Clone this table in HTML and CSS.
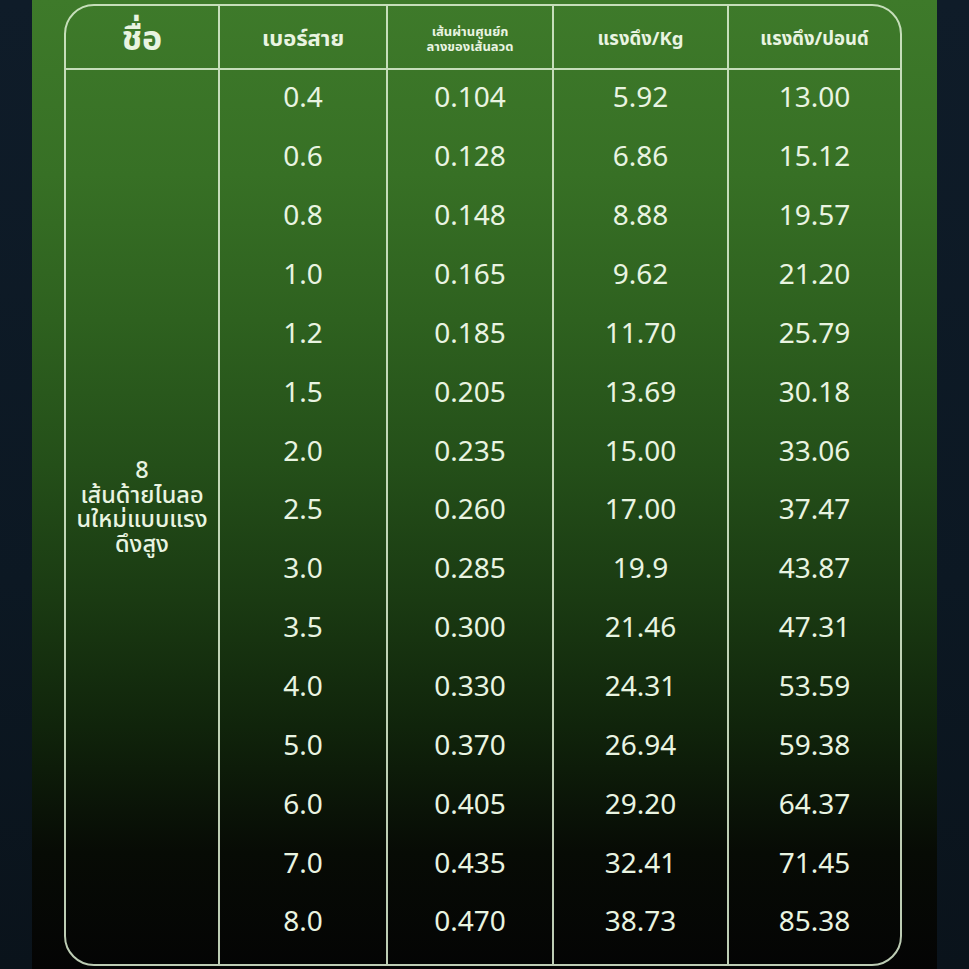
FILE: index.html
```html
<!DOCTYPE html>
<html lang="th">
<head>
<meta charset="utf-8">
<title>ตารางสาย</title>
<link rel="stylesheet" href="styles.css">
</head>
<body>
<div class="panel">
  <div class="table">
    <div class="cell head head-name">ชื่อ</div>
    <div class="cell head head-md">เบอร์สาย</div>
    <div class="cell head head-sm">เส้นผ่านศูนย์ก<br>ลางของเส้นลวด</div>
    <div class="cell head head-md2">แรงดึง/Kg</div>
    <div class="cell head head-md2 last">แรงดึง/ปอนด์</div>

    <div class="cell name">8<br>เส้นด้ายไนลอ<br>นใหม่แบบแรง<br>ดึงสูง</div>
    <div class="col">
      <div class="num">0.4</div><div class="num">0.6</div><div class="num">0.8</div><div class="num">1.0</div><div class="num">1.2</div><div class="num">1.5</div><div class="num">2.0</div><div class="num">2.5</div><div class="num">3.0</div><div class="num">3.5</div><div class="num">4.0</div><div class="num">5.0</div><div class="num">6.0</div><div class="num">7.0</div><div class="num">8.0</div>
    </div>
    <div class="col">
      <div class="num">0.104</div><div class="num">0.128</div><div class="num">0.148</div><div class="num">0.165</div><div class="num">0.185</div><div class="num">0.205</div><div class="num">0.235</div><div class="num">0.260</div><div class="num">0.285</div><div class="num">0.300</div><div class="num">0.330</div><div class="num">0.370</div><div class="num">0.405</div><div class="num">0.435</div><div class="num">0.470</div>
    </div>
    <div class="col">
      <div class="num">5.92</div><div class="num">6.86</div><div class="num">8.88</div><div class="num">9.62</div><div class="num">11.70</div><div class="num">13.69</div><div class="num">15.00</div><div class="num">17.00</div><div class="num">19.9</div><div class="num">21.46</div><div class="num">24.31</div><div class="num">26.94</div><div class="num">29.20</div><div class="num">32.41</div><div class="num">38.73</div>
    </div>
    <div class="col last">
      <div class="num">13.00</div><div class="num">15.12</div><div class="num">19.57</div><div class="num">21.20</div><div class="num">25.79</div><div class="num">30.18</div><div class="num">33.06</div><div class="num">37.47</div><div class="num">43.87</div><div class="num">47.31</div><div class="num">53.59</div><div class="num">59.38</div><div class="num">64.37</div><div class="num">71.45</div><div class="num">85.38</div>
    </div>
  </div>
</div>
</body>
</html>
```

FILE: styles.css
```css
html, body {
  margin: 0;
  padding: 0;
}
body {
  width: 969px;
  height: 969px;
  overflow: hidden;
  background: linear-gradient(to bottom, #0f1c29 0%, #0c1823 60%, #0a131b 100%);
  font-family: "Noto Sans", "Noto Sans Thai", "Noto Sans CJK SC", sans-serif;
  color: #e9f4e1;
}
.panel {
  margin: 0 32px 0 32px;
  height: 969px;
  box-sizing: border-box;
  padding: 4px 35px 3px 32px;
  background: linear-gradient(to bottom,
    #3e7a2a 0%,
    #377025 18%,
    #2e611f 33%,
    #244f19 48%,
    #1a3a12 62%,
    #10240b 75%,
    #070b05 88%,
    #040404 100%);
}
.table {
  height: 100%;
  box-sizing: border-box;
  border: 2px solid rgba(222, 240, 212, 0.85);
  border-radius: 30px;
  overflow: hidden;
  display: grid;
  grid-template-columns: 154px 168px 166px 175px 1fr;
  grid-template-rows: 64px 1fr;
}
.cell {
  border-right: 2px solid rgba(222, 240, 212, 0.85);
}
.last {
  border-right: none;
}
.head {
  border-bottom: 2px solid rgba(222, 240, 212, 0.85);
  display: flex;
  align-items: center;
  justify-content: center;
  text-align: center;
  font-weight: 700;
  padding-top: 4px;
}
.head-name {
  font-size: 34px;
}
.head-md {
  font-size: 22px;
}
.head-md2 {
  font-size: 18.5px;
}
.head-sm {
  font-size: 13px;
  line-height: 15px;
}
.name {
  display: flex;
  align-items: center;
  justify-content: center;
  text-align: center;
  font-size: 23.5px;
  font-weight: 500;
  line-height: 24.5px;
  padding-bottom: 22px;
}
.col {
  border-right: 2px solid rgba(222, 240, 212, 0.85);
  display: grid;
  grid-template-rows: repeat(15, 58.86px);
  align-content: start;
}
.col.last {
  border-right: none;
}
.num {
  display: flex;
  align-items: center;
  justify-content: center;
  font-size: 28px;
  line-height: 1;
  padding-bottom: 6px;
}
```
